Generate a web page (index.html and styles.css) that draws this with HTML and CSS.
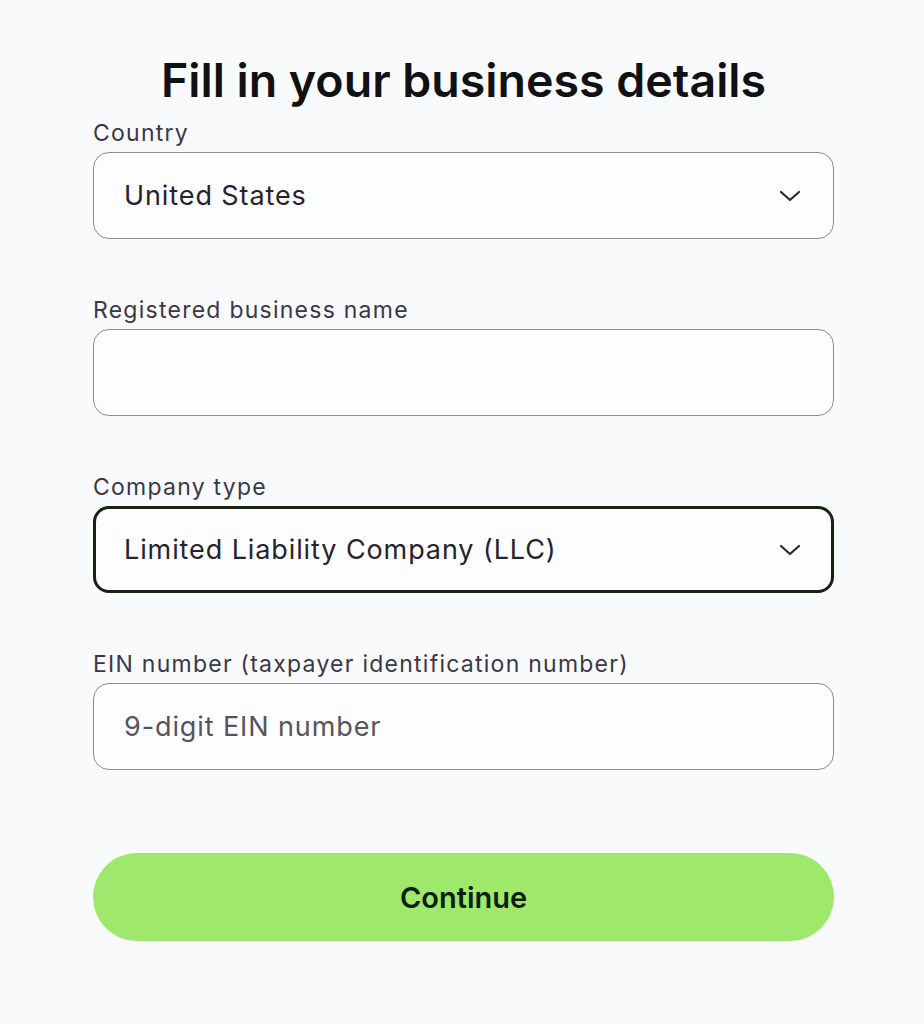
FILE: index.html
```html
<!DOCTYPE html>
<html lang="en">
<head>
<meta charset="utf-8">
<title>Fill in your business details</title>
<link rel="stylesheet" href="styles.css">
</head>
<body>
<main class="page">
  <h1 class="title">Fill in your business details</h1>
  <form class="form">
    <div class="field">
      <label class="label">Country</label>
      <div class="box select">
        <span class="value">United States</span>
        <svg class="chev" width="22" height="14" viewBox="0 0 22 14"><path d="M2 3l9 8 9-8" fill="none" stroke="#2b2a30" stroke-width="2.2" stroke-linecap="round" stroke-linejoin="round"/></svg>
      </div>
    </div>
    <div class="field">
      <label class="label">Registered business name</label>
      <div class="box"></div>
    </div>
    <div class="field">
      <label class="label">Company type</label>
      <div class="box select focus">
        <span class="value">Limited Liability Company (LLC)</span>
        <svg class="chev" width="22" height="14" viewBox="0 0 22 14"><path d="M2 3l9 8 9-8" fill="none" stroke="#2b2a30" stroke-width="2.2" stroke-linecap="round" stroke-linejoin="round"/></svg>
      </div>
    </div>
    <div class="field">
      <label class="label">EIN number (taxpayer identification number)</label>
      <div class="box"><span class="placeholder">9-digit EIN number</span></div>
    </div>
    <button type="button" class="btn">Continue</button>
  </form>
</main>
</body>
</html>
```
FILE: styles.css
```css
html, body {
  margin: 0;
  padding: 0;
  background: #f9fafc;
}
body {
  font-family: Inter, "Noto Sans", sans-serif;
  width: 924px;
  height: 1024px;
  overflow: hidden;
}
.page {
  padding: 50px 90px 0 93px;
}
.title {
  margin: 0;
  text-align: center;
  font-size: 46.5px;
  font-weight: 600;
  color: #111114;
  line-height: 60px;
  letter-spacing: 0;
  width: 741px;
}
.form {
  width: 741px;
  display: flex;
  flex-direction: column;
  gap: 56px;
}
.field {
  display: flex;
  flex-direction: column;
  gap: 4px;
}
.field:first-child {
  margin-top: 8px;
}
.label {
  font-size: 23px;
  line-height: 30px;
  color: #3b3747;
  letter-spacing: 1.25px;
}
.box {
  box-sizing: border-box;
  height: 87px;
  border: 1.5px solid #8d8c92;
  border-radius: 16px;
  background: #fdfdfe;
  display: flex;
  align-items: center;
  padding: 0 32px 0 30px;
}
.box.focus {
  border: 3px solid #17220f;
  padding-left: 28px;
  padding-right: 30px;
}
.select {
  justify-content: space-between;
}
.value {
  font-size: 27px;
  color: #26232e;
  letter-spacing: 0.9px;
}
.placeholder {
  font-size: 27px;
  color: #57535f;
  letter-spacing: 0.9px;
}
.chev {
  display: block;
}
.btn {
  margin-top: 27px;
  height: 88px;
  border: none;
  border-radius: 44px;
  background: #9ee86b;
  font-family: Inter, "Noto Sans", sans-serif;
  font-size: 29px;
  font-weight: 600;
  color: #0d1f0b;
  cursor: pointer;
}
```
